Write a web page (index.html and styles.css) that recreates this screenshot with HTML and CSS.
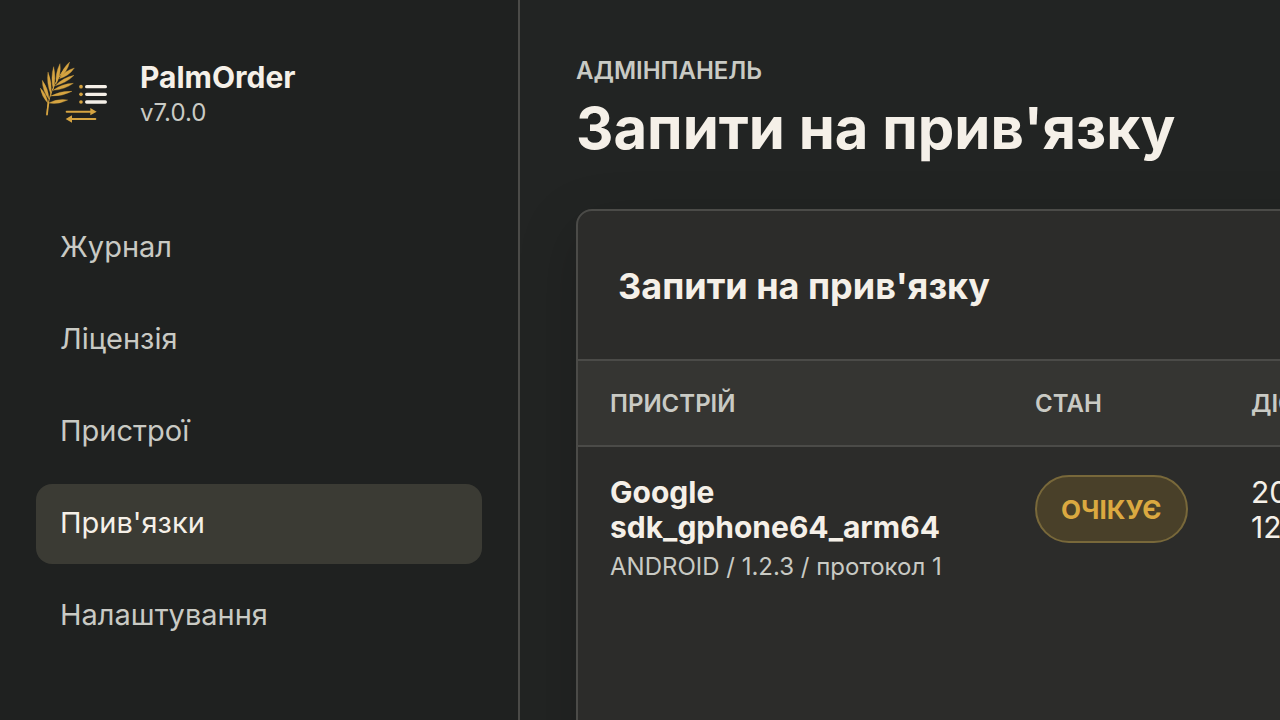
FILE: index.html
```html
<!DOCTYPE html>
<html lang="uk">
<head>
    <meta charset="UTF-8">
    <meta name="viewport" content="width=device-width, initial-scale=1.0">
    <title>PalmOrder</title>
    <link rel="stylesheet" href="styles.css">
</head>
<body>
    <div class="layout">
        <aside class="sidebar">
            <div class="brand">
                <svg class="brand-logo" viewBox="18 6 240 240" aria-hidden="true">
                    <!-- Palm leaf -->
                    <g fill="#d6a441" stroke="#d6a441" stroke-width="1" stroke-linejoin="round">
                        <path d="M54 160Q35 140 31 114Q50 133 54 160Z"/>
                        <path d="M57 148Q37 123 37 91Q56 117 57 148Z"/>
                        <path d="M63 134Q49 101 54 66Q67 99 63 134Z"/>
                        <path d="M70 118Q61 84 71 50Q79 84 70 118Z"/>
                        <path d="M79 101Q75 70 90 41Q94 72 79 101Z"/>
                        <path d="M90 83Q97 55 119 36Q112 65 90 83Z"/>
                        <path d="M88 86Q104 62 133 54Q117 78 88 86Z"/>
                        <path d="M76 107Q99 83 132 76Q109 99 76 107Z"/>
                        <path d="M69 121Q95 101 130 100Q103 119 69 121Z"/>
                        <path d="M62 138Q91 122 126 124Q97 140 62 138Z"/>
                        <path d="M56 159Q84 145 113 150Q86 164 56 159Z"/>
                    </g>
                    <path d="M51 194C52 150 68 100 112 46" fill="none" stroke="#d6a441" stroke-width="3"/>
                    <path d="M51 194L55 160" stroke="#d6a441" stroke-width="5" stroke-linecap="round"/>
                    <!-- List -->
                    <g fill="#d6a441">
                        <circle cx="153" cy="110" r="5.5"/>
                        <circle cx="153" cy="133" r="5.5"/>
                        <circle cx="153" cy="156" r="5.5"/>
                    </g>
                    <path d="M170 110H226M170 133H226M170 156H226" stroke="#f5f0e8" stroke-width="10" stroke-linecap="round"/>
                    <!-- Sync arrows -->
                    <path d="M110 185H184M123 207H196" stroke="#d6a441" stroke-width="6" stroke-linecap="round"/>
                    <path d="M181 174L200 185L181 196ZM126 196L107 207L126 218Z" fill="#d6a441"/>
                </svg>
                <div class="brand-text">
                    <strong class="brand-name">PalmOrder</strong>
                    <span class="brand-version">v7.0.0</span>
                </div>
            </div>
            <nav class="nav">
                <a class="nav-link" href="#journal">Журнал</a>
                <a class="nav-link" href="#license">Ліцензія</a>
                <a class="nav-link" href="#devices">Пристрої</a>
                <a class="nav-link active" href="#bindings" aria-current="page">Прив'язки</a>
                <a class="nav-link" href="#settings">Налаштування</a>
            </nav>
        </aside>

        <main class="content">
            <header class="page-header">
                <p class="eyebrow">Адмінпанель</p>
                <h1>Запити на прив'язку</h1>
            </header>

            <section class="panel">
                <div class="panel-head">
                    <h2>Запити на прив'язку</h2>
                </div>
                <table>
                    <thead>
                        <tr>
                            <th class="col-device">Пристрій</th>
                            <th class="col-status">Стан</th>
                            <th>Діє до</th>
                        </tr>
                    </thead>
                    <tbody>
                        <tr>
                            <td>
                                <strong>Google sdk_gphone64_arm64</strong>
                                <small>ANDROID / 1.2.3 / протокол 1</small>
                            </td>
                            <td><span class="badge">Очікує</span></td>
                            <td>20.05.2026<br>12:30:00</td>
                        </tr>
                    </tbody>
                </table>
            </section>
        </main>
    </div>
</body>
</html>
```

FILE: styles.css
```css
:root {
    --bg: #222423;
    --sidebar: #1f2120;
    --panel: #2c2c2a;
    --panel-head: #353532;
    --line: #4b4b48;
    --text: #f5f0e8;
    --muted: #c9cac4;
    --gold: #dba940;
}

* {
    box-sizing: border-box;
}

body {
    margin: 0;
    background: var(--bg);
    color: var(--text);
    font-family: Inter, "Liberation Sans", sans-serif;
    font-size: 30px;
    line-height: 35px;
}

h1,
h2,
p {
    margin: 0;
}

.layout {
    display: grid;
    grid-template-columns: 520px minmax(0, 1fr);
    height: 100vh;
    overflow: hidden;
}

/* Sidebar */
.sidebar {
    padding: 52px 36px;
    background: var(--sidebar);
    border-right: 2px solid var(--line);
}

.brand {
    display: flex;
    align-items: center;
    gap: 24px;
    margin-bottom: 76px;
}

.brand-logo {
    width: 80px;
    height: 80px;
}

.brand-text {
    display: flex;
    flex-direction: column;
    padding-top: 6px;
}

.brand-name {
    font-weight: 700;
}

.brand-version {
    color: var(--muted);
    font-size: 24px;
}

.nav {
    display: grid;
    gap: 12px;
}

.nav-link {
    padding: 19px 24px 21px;
    border-radius: 16px;
    color: var(--muted);
    font-size: 29px;
    line-height: 40px;
    text-decoration: none;
}

.nav-link.active {
    background: #3b3b34;
    color: var(--text);
}

/* Content */
.content {
    padding: 53px 56px;
}

.page-header {
    margin-bottom: 42px;
}

.eyebrow {
    color: var(--muted);
    font-size: 24px;
    font-weight: 600;
    line-height: 36px;
    text-transform: uppercase;
}

h1 {
    font-size: 58px;
    font-weight: 700;
    line-height: 78px;
}

.panel {
    width: max-content;
    min-width: 100%;
    min-height: 100%;
    background: var(--panel);
    border: 2px solid var(--line);
    border-radius: 16px;
    box-shadow: 0 20px 60px rgba(0, 0, 0, 0.2);
}

.panel-head {
    padding: 53px 40px 51px;
    border-bottom: 2px solid var(--line);
}

h2 {
    font-size: 36px;
    font-weight: 700;
    line-height: 44px;
}

table {
    width: 1100px;
    border-collapse: separate;
    border-spacing: 0;
    table-layout: fixed;
}

th,
td {
    padding: 28px 32px;
    text-align: left;
    vertical-align: top;
}

th {
    padding: 25px 32px 24px;
    background: var(--panel-head);
    border-bottom: 2px solid var(--line);
    color: var(--muted);
    font-size: 24px;
    font-weight: 600;
    text-transform: uppercase;
}

.col-device {
    width: 425px;
}

.col-status {
    width: 216px;
}

td strong,
td small {
    display: block;
}

td small {
    margin-top: 4px;
    color: var(--muted);
    font-size: 24px;
}

.badge {
    display: inline-block;
    padding: 15px 24px 14px;
    background: #494029;
    border: 2px solid #78683a;
    border-radius: 34px;
    color: var(--gold);
    font-size: 26px;
    font-weight: 700;
    text-transform: uppercase;
    vertical-align: top;
}
```
